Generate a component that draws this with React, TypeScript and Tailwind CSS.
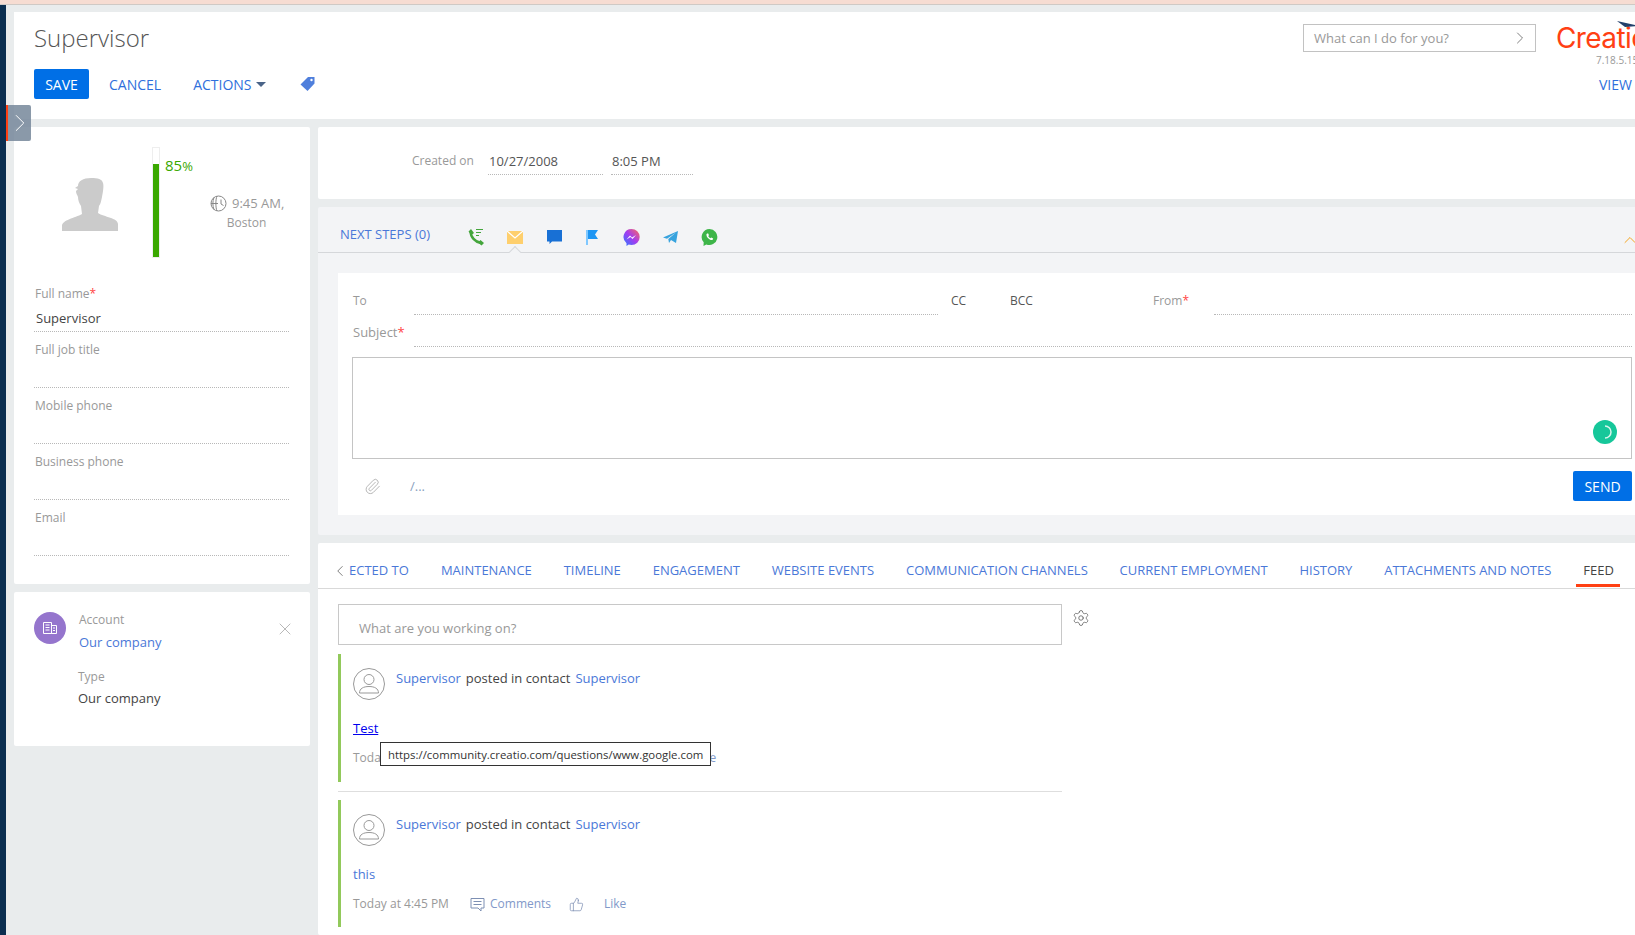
import { ChevronLeft, ChevronRight, ChevronUp, Paperclip, Settings, ThumbsUp, X } from 'lucide-react';

const tabs = [
   'MAINTENANCE',
   'TIMELINE',
   'ENGAGEMENT',
   'WEBSITE EVENTS',
   'COMMUNICATION CHANNELS',
   'CURRENT EMPLOYMENT',
   'HISTORY',
   'ATTACHMENTS AND NOTES',
];

function Field({ label, value, required }: { label: string; value?: string; required?: boolean }) {
   return (
      <div className="h-14 w-[255px] flex flex-col border-b border-dotted border-[#b8b8b8] pt-[9px]">
         <div className="text-[12px] leading-[18px] text-[#999] pl-px">
            {label}
            {required && <span className="text-[#f44]">*</span>}
         </div>
         {value && <div className="mt-[5px] text-[13px] leading-5 text-[#444] pl-[2px]">{value}</div>}
      </div>
   );
}

function UserCircle() {
   return (
      <svg width="32" height="32" viewBox="0 0 32 32" fill="none" stroke="#999" strokeWidth="1" className="shrink-0">
         <circle cx="16" cy="16" r="15.5" />
         <circle cx="16" cy="11.5" r="5" />
         <path d="M6.5 25c0-4.5 4-6.5 9.5-6.5s9.500 2 9.500 6.500z" />
      </svg>
   );
}

function PostHead() {
   return (
      <div className="flex">
         <UserCircle />
         <div className="ml-[11px] flex text-[13px] leading-5 gap-[5px] h-5">
            <span className="text-[#4a78d8]">Supervisor</span>
            <span className="text-[#444]">posted in contact</span>
            <span className="text-[#4a78d8]">Supervisor</span>
         </div>
      </div>
   );
}

function PostFooter({ likeGap }: { likeGap: string }) {
   return (
      <div className="mt-[10px] flex items-center text-[12px] leading-5 h-5">
         <span className="text-[#999] w-[117px] shrink-0">Today at 4:45 PM</span>
         <svg width="15" height="15" viewBox="0 0 15 15" fill="none" stroke="#7d8fb3" className="shrink-0">
            <path d="M1 1.500h13v9.500h-3v3l-3-3h-7z" />
            <path d="M3.500 4.500h8M3.500 7.500h8" />
         </svg>
         <span className="ml-[5px] text-[#8299c9] w-[79px] shrink-0">Comments</span>
         <ThumbsUp size={15} strokeWidth={1.2} color="#7d8fb3" className="shrink-0" />
         <span className={`text-[#8299c9] ${likeGap}`}>Like</span>
      </div>
   );
}

export default function App() {
   return (
      <div className="relative w-[1635px] h-[935px] overflow-hidden flex flex-col font-['Open_Sans',sans-serif]">
         <div className="h-[5px] shrink-0 bg-[#f6dcd2] border-b border-[#cfc9c5]" />
         <div className="flex flex-1 min-h-0">
            <div className="w-[6px] shrink-0 bg-[#0b2e50]" />
            <div className="flex-1 min-w-0 bg-[#e9eced] pl-2 pt-[7px] flex flex-col gap-2">
               {/* header */}
               <div className="h-[107px] shrink-0 bg-white flex justify-between">
                  <div className="pl-5">
                     <div className="pt-[9px] text-[24px] leading-[34px] font-light text-[#555]">Supervisor</div>
                     <div className="mt-[14px] flex items-center text-[14px]">
                        <button className="w-[55px] h-[30px] bg-[#006fe6] rounded-[2px] text-white">SAVE</button>
                        <span className="ml-5 text-[#2f6fdc]">CANCEL</span>
                        <span className="ml-[32px] text-[#2f6fdc]">ACTIONS</span>
                        <span className="ml-1 w-0 h-0 border-x-[5px] border-x-transparent border-t-[5px] border-t-[#4a6488]" />
                        <svg width="15" height="14" viewBox="0 0 15 14" className="ml-[34px]">
                           <path d="M8 0h6.500v6.500l-7 7.500-7-6.500z" fill="#4f7fdc" />
                           <circle cx="11.500" cy="3" r="1.200" fill="#fff" />
                        </svg>
                     </div>
                  </div>
                  <div className="flex">
                     <div className="mt-3 w-[233px] h-7 border border-[#c2c2c2] flex items-center justify-between pl-[10px] pr-[5px]">
                        <span className="text-[13px] text-[#999] mt-[2px]">What can I do for you?</span>
                        <ChevronRight size={20} strokeWidth={1} color="#666" />
                     </div>
                     <div className="ml-5 w-[79px] shrink-0 relative">
                        <div className="mt-[10px] text-[28px] leading-[32px] tracking-[-0.6px] text-[#ff4013] font-['Inter',sans-serif] whitespace-nowrap">Creatio</div>
                        <svg width="22" height="10" viewBox="0 0 22 10" className="absolute left-[61px] top-[9px]">
                           <path d="M0 0l22 5-14 1z" fill="#22406b" />
                        </svg>
                        <div className="text-[10px] leading-3 text-[#999] pl-10 whitespace-nowrap">7.18.5.1511</div>
                        <div className="mt-2 text-[14px] text-[#2f6fdc] pl-[43px] whitespace-nowrap">VIEW</div>
                     </div>
                  </div>
               </div>

               <div className="flex-1 min-h-0 flex gap-2">
                  {/* left column */}
                  <div className="w-[296px] shrink-0 flex flex-col gap-2">
                     <div className="h-[457px] bg-white pl-5 rounded-[2px]">
                        <div className="h-[149px] flex">
                           <svg width="56" height="53" viewBox="0 0 56 53" className="ml-[28px] mt-[51px] shrink-0">
                              <path d="M16 8c0-5 5-8 13-8 7 0 11 1 12 5 1 3 0 9-1 14-1 4-1 6-3 9l-1 7c6 4 20 5 20 11v7H0v-5c0-6 13-8 20-12l-1-8c-2-3-3-6-3-9-1-3-2-3-2-6l2-2-3-1z" fill="#cbcbcb" />
                           </svg>
                           <div className="relative ml-[34px] mt-5 w-2 h-[111px] border border-[#eee] shrink-0">
                              <div className="absolute left-0 right-0 bottom-0 h-[93px] bg-[#3aa800]" />
                           </div>
                           <div className="ml-[5px]">
                              <div className="mt-[28px] text-[15px] leading-5 text-[#3aa800]">
                                 85<span className="text-[13px]">%</span>
                              </div>
                              <div className="ml-[45px] mt-[18px] w-[76px] text-center text-[13px] leading-[18px] text-[#999]">
                                 <div className="flex items-center whitespace-nowrap">
                                    <svg width="17" height="17" viewBox="0 0 17 17" fill="none" stroke="#888" className="shrink-0 mr-[5px]">
                                       <circle cx="8.500" cy="8.500" r="7.500" />
                                       <path d="M1 8.500h7M4 2.500c-1.500 3-1.500 9 0 12M7 1c-1.500 3-1.500 12 0 15M11 4.500v4.500l2.500 1.500" />
                                    </svg>
                                    9:45 AM,
                                 </div>
                                 <div className="pr-[3px] mt-[2px] text-[12px]">Boston</div>
                              </div>
                           </div>
                        </div>
                        <Field label="Full name" value="Supervisor" required />
                        <Field label="Full job title" />
                        <Field label="Mobile phone" />
                        <Field label="Business phone" />
                        <Field label="Email" />
                     </div>
                     <div className="h-[154px] bg-white rounded-[2px] flex">
                        <div className="ml-5 mt-5 w-8 h-8 rounded-full bg-[#9575cd] flex items-center justify-center shrink-0">
                           <svg width="14" height="12" viewBox="0 0 14 12" fill="none" stroke="#fff">
                              <path d="M.5.500h8v11h-8zM8.500 3.500h5v8h-5zM2.500 3h4M2.500 5.500h4M2.500 8h4M10 6h2M10 8.500h2" />
                           </svg>
                        </div>
                        <div className="ml-[13px] pt-[18px] text-[13px] leading-5">
                           <div className="text-[12px] text-[#999]">Account</div>
                           <div className="mt-[2px] text-[#4a78d8]">Our company</div>
                           <div className="mt-[15px] -ml-px text-[12px] text-[#999]">Type</div>
                           <div className="mt-px -ml-px text-[#444]">Our company</div>
                        </div>
                        <X size={20} strokeWidth={1} color="#aaa" className="ml-auto mr-[15px] mt-[27px]" />
                     </div>
                  </div>

                  {/* right column */}
                  <div className="flex-1 min-w-0 flex flex-col gap-2">
                     <div className="h-[72px] shrink-0 bg-white flex pt-[24px] rounded-l-[2px]">
                        <span className="ml-[94px] w-[76px] text-[12px] leading-5 text-[#999]">Created on</span>
                        <div className="w-[115px] h-6 border-b border-dotted border-[#b8b8b8] text-[13px] leading-5 text-[#555] pl-px">10/27/2008</div>
                        <div className="ml-2 w-[82px] h-6 border-b border-dotted border-[#b8b8b8] text-[13px] leading-5 text-[#555] pl-px">8:05 PM</div>
                     </div>

                     <div className="h-[328px] shrink-0 bg-[#f3f4f6] rounded-l-[2px]">
                        <div className="relative h-[46px] border-b border-[#d5d7da] flex items-center pl-[22px]">
                           <span className="text-[13px] text-[#4a78d8] w-[127px] mt-[14px] -translate-y-[2px]">NEXT STEPS (0)</span>
                           <div className="flex items-center gap-[21px] mt-[15px]">
                              <svg width="18" height="18" viewBox="0 0 18 18" fill="none">
                                 <path d="M3.500 3C3.500 9 8 14 14 15" stroke="#44a53c" strokeWidth="2.500" />
                                 <path d="M1.500 3.500L4 1l3 4-2.500 2zM11 14.500l2.500-2.500 3.500 3-2.500 2.500z" fill="#44a53c" />
                                 <path d="M9 1.500h7M9 4.500h5M9 7.500h3" stroke="#44a53c" />
                              </svg>
                              <svg width="16" height="13" viewBox="0 0 16 13" className="ml-px">
                                 <path d="M0 0h16v13H0z" fill="#fecf6d" />
                                 <path d="M0 0l8 7 8-7" fill="none" stroke="#fff" strokeWidth="1.200" />
                              </svg>
                              <svg width="15" height="15" viewBox="0 0 15 15" className="ml-[3px]">
                                 <path d="M0 0h15v11.500H5L2.500 14v-2.500H0z" fill="#1870d5" />
                              </svg>
                              <svg width="12" height="15" viewBox="0 0 12 15" className="ml-[3px]">
                                 <path d="M0 0h2v15H0z" fill="#80c8ff" />
                                 <path d="M2 0h10L9 4.500l3 4.500H2z" fill="#1e96f3" />
                              </svg>
                              <svg width="17" height="17" viewBox="0 0 17 17" className="ml-1">
                                 <defs>
                                    <linearGradient id="msg" x1="0" y1="1" x2="1" y2="0">
                                       <stop offset="0" stopColor="#2a7bff" />
                                       <stop offset="0.5" stopColor="#a33cf0" />
                                       <stop offset="1" stopColor="#ff6a5a" />
                                    </linearGradient>
                                 </defs>
                                 <path d="M8.500 0a8.200 8 0 0 1 0 16c-1 0-2-.2-2.800-.5L3.500 17v-2.800A8 8 0 0 1 8.500 0z" fill="url(#msg)" />
                                 <path d="M3.500 10.500l3.500-4 2 2 4-2.500-3.500 4-2-2z" fill="#fff" />
                              </svg>
                              <svg width="15" height="13" viewBox="0 0 15 13" className="ml-[2px]">
                                 <path d="M0 6.500L15 0l-2 12-5-3-2 3-.7-4L13 1.500 4 7.800z" fill="#37a3de" />
                              </svg>
                              <svg width="17" height="17" viewBox="0 0 17 17" className="ml-[2px]">
                                 <path d="M8.500 0a8 8 0 1 1-3.200 15.400L2.500 17l.2-3.700A8 8 0 0 1 8.500 0z" fill="#3eb549" />
                                 <path d="M5.500 5l1.500-.8 1 2-.8.9c.4 1 1.100 1.700 2.100 2.100l.9-.8 2 1-.7 1.600c-3 .5-6.500-3-6-6z" fill="#fff" />
                              </svg>
                           </div>
                           <span className="absolute left-[191px] -bottom-px w-[12px] h-[7px] overflow-hidden">
                              <span className="absolute left-[1px] top-[2px] w-[10px] h-[10px] rotate-45 bg-[#f3f4f6] border-l border-t border-[#d5d7da]" />
                           </span>
                           <ChevronUp size={20} strokeWidth={1.2} color="#f5a623" className="absolute -right-[5px] top-[23px]" />
                        </div>
                        <div className="ml-5 mt-5 h-[242px] bg-white pl-[14px] pr-[3px]">
                           <div className="h-[42px] flex items-end text-[12px] leading-5 text-[#999]">
                              <span className="w-[62px] pb-1 pl-px">To</span>
                              <span className="w-[524px] border-b border-dotted border-[#b8b8b8]" />
                              <span className="ml-[13px] w-[59px] pb-1 text-[#555]">CC</span>
                              <span className="w-[143px] pb-1 text-[#555]">BCC</span>
                              <span className="w-[61px] pb-1">
                                 From<span className="text-[#f44]">*</span>
                              </span>
                              <span className="flex-1 border-b border-dotted border-[#b8b8b8]" />
                           </div>
                           <div className="h-8 flex items-end text-[13px] leading-5 text-[#999]">
                              <span className="w-[62px] pb-[5px] pl-px">
                                 Subject<span className="text-[#f44]">*</span>
                              </span>
                              <span className="flex-1 border-b border-dotted border-[#b8b8b8]" />
                           </div>
                           <div className="relative mt-[10px] h-[102px] border border-[#c4c4c4]">
                              <div className="absolute right-[14px] bottom-[14px] w-6 h-6 rounded-full bg-[#16c79a] flex items-center justify-center">
                                 <svg width="14" height="14" viewBox="0 0 14 14" fill="none" stroke="#d8f5ec" strokeWidth="1.500">
                                    <path d="M7 1a6 6 0 0 1 0 12" />
                                 </svg>
                              </div>
                           </div>
                           <div className="mt-3 flex items-start justify-between">
                              <div className="flex items-center h-[30px]">
                                 <Paperclip size={17} strokeWidth={1.2} color="#aaa" className="ml-[12px]" />
                                 <span className="ml-[29px] mt-[2px] text-[13px] text-[#8a9fc0]">/...</span>
                              </div>
                              <button className="w-[59px] h-[30px] bg-[#006fe6] rounded-[2px] text-white text-[14px]">SEND</button>
                           </div>
                        </div>
                     </div>

                     <div className="flex-1 min-h-0 bg-white rounded-l-[2px]">
                        <div className="h-[46px] pt-[11px] border-b border-[#d9d9d9] flex items-center pl-[13px] text-[13px] text-[#4a78d8] whitespace-nowrap">
                           <ChevronLeft size={18} strokeWidth={1} color="#555" className="shrink-0" />
                           <span>ECTED TO</span>
                           <div className="ml-8 flex gap-[31.85px]">
                              {tabs.map((tab) => (
                                 <span key={tab}>{tab}</span>
                              ))}
                              <span className="relative text-[#444]">
                                 FEED
                                 <span className="absolute -left-[7px] -right-[6px] top-[23px] h-[3px] bg-[#ff4013]" />
                              </span>
                           </div>
                        </div>
                        <div className="pl-5">
                           <div className="mt-[15px] flex items-start">
                              <div className="w-[724px] h-[41px] border border-[#c8c8c8] pl-5 pt-[13px] text-[13px] leading-5 text-[#999]">What are you working on?</div>
                              <Settings size={18} strokeWidth={1} color="#555" className="ml-[10px] mt-[5px]" />
                           </div>
                           <div className="mt-[9px] h-[128px] border-l-[3px] border-[#92c95b] pl-3 pt-[14px]">
                              <PostHead />
                              <div className="mt-[18px] text-[13px] leading-5 text-[#0000ee] underline">Test</div>
                              <PostFooter likeGap="ml-[110px]" />
                           </div>
                           <div className="mt-[9px] w-[724px] h-px bg-[#dedede]" />
                           <div className="mt-2 h-[127px] border-l-[3px] border-[#92c95b] pl-3 pt-[14px]">
                              <PostHead />
                              <div className="mt-[18px] text-[13px] leading-5 text-[#4a78d8] font-medium">this</div>
                              <PostFooter likeGap="ml-[20px]" />
                           </div>
                        </div>
                     </div>
                  </div>
               </div>
            </div>
         </div>

         {/* sidebar toggle */}
         <div className="absolute left-[6px] top-[105px] w-[25px] h-9 bg-[#75879a]/85 border-l-2 border-[#ff4013] rounded-r-[2px] flex items-center justify-center">
            <ChevronRight size={30} strokeWidth={0.8} color="#fff" className="shrink-0" />
         </div>

         {/* link tooltip */}
         <div className="absolute left-[380px] top-[742px] w-[331px] h-6 bg-white border border-[#333] pl-[7px] text-[11.4px] leading-[23px] text-[#333] whitespace-nowrap">
            https://community.creatio.com/questions/www.google.com
         </div>
      </div>
   );
}
